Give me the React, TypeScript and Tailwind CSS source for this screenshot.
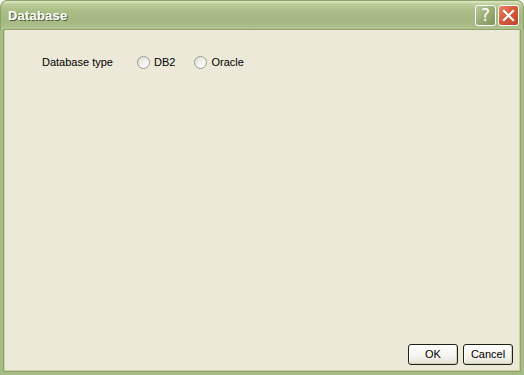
import React from "react";

function Radio({ label }: { label: string }) {
  return (
    <div className="flex items-center gap-[4px]">
      <div className="w-[13px] h-[13px] rounded-full border border-[#9a9a92] bg-[linear-gradient(135deg,#dcdbd3_0%,#f4f4f0_55%,#ffffff_100%)]" />
      <span>{label}</span>
    </div>
  );
}

export default function App() {
  return (
    <div className="w-[524px] h-[375px] flex flex-col font-['Liberation_Sans',Arial,sans-serif] text-[11px] text-black select-none">
      {/* title bar */}
      <div className="h-[30px] shrink-0 rounded-t-[7px] border border-b-0 border-[#8ca36a] bg-[linear-gradient(180deg,#dfe8c8_0%,#bccd98_12%,#aabd87_35%,#a4b882_65%,#aabd88_85%,#b4c593_100%)] flex items-center pl-[7px] pr-[4px]">
        <span className="text-white font-bold text-[13px] [text-shadow:1px_1px_0_#4f5e34] tracking-[0.2px]">
          Database
        </span>
        <div className="ml-auto flex items-center gap-[2px] mt-[-1px]">
          <div className="w-[21px] h-[21px] rounded-[3px] border border-white bg-[linear-gradient(135deg,#b9c99a_0%,#98ad74_50%,#7e9458_100%)] flex items-center justify-center">
            <span className="text-white text-[17px] leading-none font-['DejaVu_Sans',sans-serif]">?</span>
          </div>
          <div className="w-[21px] h-[21px] rounded-[3px] border border-white bg-[linear-gradient(135deg,#e88a6a_0%,#d55a3a_45%,#c0442a_100%)] flex items-center justify-center">
            <svg width="13" height="13" viewBox="0 0 13 13">
              <path d="M2 2 L11 11 M11 2 L2 11" stroke="white" strokeWidth="2.2" strokeLinecap="square" />
            </svg>
          </div>
        </div>
      </div>
      {/* body with frame */}
      <div className="flex-1 flex flex-col bg-[#ECE9D8] border-l-[4px] border-r-[4px] border-b-[4px] border-[#a8bb86] shadow-[inset_1px_0_0_#c4d3a8,inset_-1px_0_0_#c4d3a8,inset_0_-1px_0_#c4d3a8]">
        <div className="flex-1 flex flex-col outline outline-1 outline-[#8ca36a]">
          <div className="flex items-center h-[13px] mt-[26px] pl-[38px]">
            <span className="w-[95px]">Database type</span>
            <div className="flex items-center gap-[19px]">
              <Radio label="DB2" />
              <Radio label="Oracle" />
            </div>
          </div>
          <div className="mt-auto flex justify-end gap-[5px] pr-[7px] pb-[6px]">
            <button className="w-[50px] h-[21px] rounded-[3px] border border-[#1b2410] bg-[linear-gradient(180deg,#ffffff_0%,#f4f3ee_60%,#e3e0d3_100%)] shadow-[inset_-1px_-1px_0_#d6d0bc,inset_1px_1px_0_#fff]">
              OK
            </button>
            <button className="w-[50px] h-[21px] rounded-[3px] border border-[#1b2410] bg-[linear-gradient(180deg,#ffffff_0%,#f4f3ee_60%,#e3e0d3_100%)] shadow-[inset_-1px_-1px_0_#d6d0bc,inset_1px_1px_0_#fff]">
              Cancel
            </button>
          </div>
        </div>
      </div>
    </div>
  );
}
